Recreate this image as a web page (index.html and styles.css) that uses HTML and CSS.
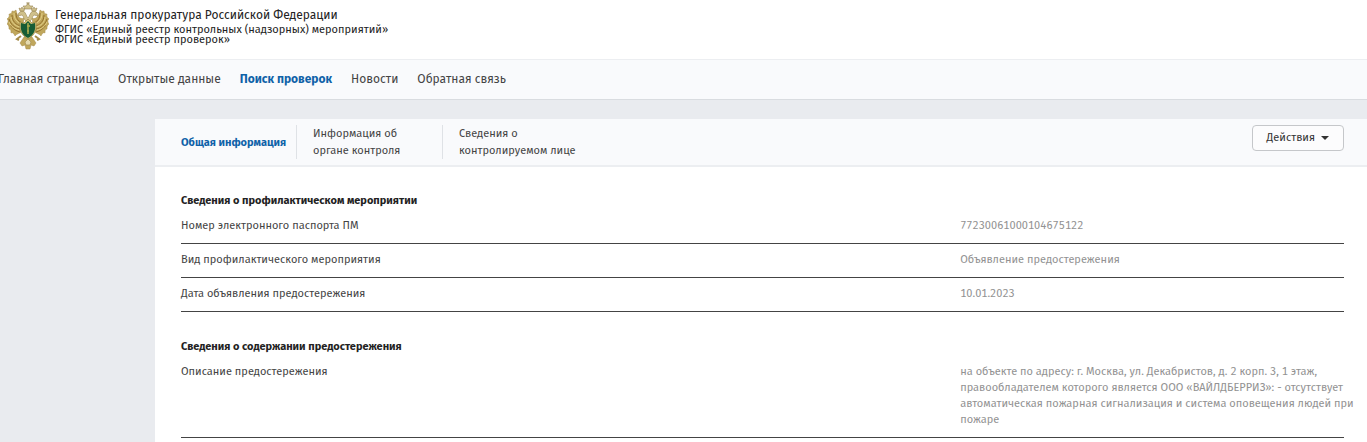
FILE: index.html
```html
<!DOCTYPE html>
<html lang="ru">
<head>
<meta charset="utf-8">
<meta name="viewport" content="width=device-width, initial-scale=1">
<title>ФГИС «Единый реестр проверок»</title>
<link rel="stylesheet" href="styles.css">
</head>
<body>
<header class="header">
  <svg class="emblem" viewBox="0 0 42 48" aria-hidden="true">
    <g fill="#c0a75c" stroke="#a58b48" stroke-width=".5">
      <path d="M17 16C13 18 10 14 9 8C7 10 6 9 5 9C5 12 3 12 2 12C3 15 1 16 0 17C2 18 1 21 0 22C2 23 2 25 2 27C4 27 4 29 4 31C6 30 7 32 8 34C10 31 13 32 15 29Z"/>
      <path d="M25 16C29 18 32 14 33 8C35 10 36 9 37 9C37 12 39 12 40 12C39 15 41 16 42 17C40 18 41 21 42 22C40 23 40 25 40 27C38 27 38 29 38 31C36 30 35 32 34 34C32 31 29 32 27 29Z"/>
      <path d="M17 35L13 41L15 44L18 43L19 47L23 47L24 43L27 44L29 41L25 35Z"/>
      <path d="M14 34L10 37L12 38M28 34L32 37L30 38" fill="none" stroke-width="2"/>
    </g>
    <g fill="none" stroke="#94712b" stroke-width="1">
      <path d="M9 11C9 17 12 20 16 21M5 13C5 19 9 23 14 24M2 17C4 23 8 26 13 27M3 23C6 27 9 29 13 30"/>
      <path d="M33 11C33 17 30 20 26 21M37 13C37 19 33 23 28 24M40 17C38 23 34 26 29 27M39 23C36 27 33 29 29 30"/>
    </g>
    <g fill="none" stroke="#e3cf86" stroke-width="1">
      <path d="M7 11C7 17 10 20 14 22M4 15C4 20 8 24 13 25M2 20C4 25 8 27 12 28"/>
      <path d="M35 11C35 17 32 20 28 22M38 15C38 20 34 24 29 25M40 20C38 25 34 27 30 28"/>
    </g>
    <g fill="#cfc08b" stroke="#998550" stroke-width=".6">
      <path d="M19 19C16 17 17 14 15 13L11 14C11 11 13 9 16 9C19 10 19 14 21 16C23 14 23 10 26 9C29 9 31 11 31 14L27 13C25 14 26 17 23 19Z"/>
      <path d="M13 9L12 6L14 7L15 5L16 7L18 6L17 9ZM25 9L24 6L26 7L27 5L28 7L30 6L29 9Z"/>
      <path d="M18 7L16 4L19 4L21 1L23 4L26 4L24 7Z"/>
      <path d="M21 0V3M19 1H23" fill="none"/>
    </g>
    <path d="M13 20L17 21L21 17L25 21L29 20C30 28 28 33 21 37C14 33 12 28 13 20Z" fill="#d7c67a" stroke="#9c8444" stroke-width=".7"/>
    <path d="M14 21L18 22L21 19L24 22L28 21C29 28 27 33 21 36C15 33 13 28 14 21Z" fill="#175c35"/>
    <path d="M21 21V32M20 24H23M20 29H22" fill="none" stroke="#a9a94c" stroke-width="1.5"/>
    <path d="M18 40L21 37L24 40L23 43H19Z" fill="#e5dab0" stroke="#a58f54" stroke-width=".7"/>
  </svg>
  <div class="brand">
    <div class="brand-name">Генеральная прокуратура Российской Федерации</div>
    <div class="brand-system">ФГИС «Единый реестр контрольных (надзорных) мероприятий»</div>
    <div class="brand-system">ФГИС «Единый реестр проверок»</div>
  </div>
</header>
<nav class="nav">
  <a href="#">Главная страница</a>
  <a href="#">Открытые данные</a>
  <a class="active" href="#">Поиск проверок</a>
  <a href="#">Новости</a>
  <a href="#">Обратная связь</a>
</nav>
<main class="card">
  <div class="toolbar">
    <div class="tabs">
      <a class="tab active" href="#">Общая информация</a>
      <a class="tab" href="#">Информация об органе контроля</a>
      <a class="tab tab-wide" href="#">Сведения о контролируемом лице</a>
    </div>
    <button class="actions" type="button">Действия
      <svg class="caret" viewBox="0 0 8 4" aria-hidden="true"><path d="M0 0H8L4 4Z" fill="#333"/></svg>
    </button>
  </div>
  <div class="content">
    <section class="section">
      <h2>Сведения о профилактическом мероприятии</h2>
      <table>
        <tr><th scope="row">Номер электронного паспорта ПМ</th><td>77230061000104675122</td></tr>
        <tr><th scope="row">Вид профилактического мероприятия</th><td>Объявление предостережения</td></tr>
        <tr><th scope="row">Дата объявления предостережения</th><td>10.01.2023</td></tr>
      </table>
    </section>
    <section class="section">
      <h2>Сведения о содержании предостережения</h2>
      <table>
        <tr><th scope="row">Описание предостережения</th><td class="description">на объекте по адресу: г. Москва, ул. Декабристов, д. 2 корп. 3, 1 этаж,<br>правообладателем которого является ООО «ВАЙЛДБЕРРИЗ»: - отсутствует<br>автоматическая пожарная сигнализация и система оповещения людей при<br>пожаре</td></tr>
      </table>
    </section>
  </div>
</main>
</body>
</html>
```
FILE: styles.css
```css
* { box-sizing: border-box; }
html { background: #e9ebef; }
body {
  margin: 0;
  overflow-x: hidden;
  font-family: "Fira Sans", Roboto, "Noto Sans", sans-serif;
  font-size: 11px;
  font-variant-numeric: tabular-nums;
  line-height: 16px;
  color: #444;
}
a { color: inherit; text-decoration: none; }

.header {
  display: flex;
  gap: 6px;
  height: 59px;
  padding: 2px 7px;
  background: #fff;
}
.emblem { width: 42px; height: 48px; }
.brand { padding-top: 5px; color: #222; }
.brand-name { font-size: 12px; line-height: 16px; margin-bottom: 2px; }
.brand-system { line-height: 10px; white-space: nowrap; }

.nav {
  display: flex;
  align-items: center;
  gap: 19px;
  height: 41px;
  padding-bottom: 2px;
  margin-left: -2px;
  border-top: 1px solid #eceef1;
  border-bottom: 1px solid #d9dce0;
  background: #f9fafc;
  font-size: 12px;
  white-space: nowrap;
}
.active { color: #0f62a8; font-weight: 700; }

.card { margin: 19px 0 0 155px; background: #fff; }
.toolbar {
  display: flex;
  justify-content: space-between;
  align-items: flex-start;
  padding: 6px 23px 6px 10px;
  border-bottom: 2px solid #eceef1;
  background: #f9fafc;
}
.tabs { display: flex; }
.tab {
  display: flex;
  align-items: center;
  width: 146px;
  padding: 0 16px;
  border-left: 1px solid #dfe2e6;
  line-height: 17px;
}
.tab:first-child { width: 131px; border-left: 0; white-space: nowrap; }
.tab-wide { width: 156px; }
.actions {
  display: flex;
  align-items: center;
  gap: 6px;
  height: 26px;
  padding: 0 14px;
  border: 1px solid #c5c7ca;
  border-radius: 4px;
  background: #fcfcfd;
  font: inherit;
  color: #333;
}
.caret { width: 8px; height: 4px; }

.content { padding: 26px 23px 1px 26px; }
.section { margin-bottom: 27px; }
h2 { margin: 0 0 1px; font-size: 11px; line-height: 16px; color: #222; }
table { width: 100%; border-collapse: collapse; table-layout: fixed; }
th, td { padding: 8px 0 9px; vertical-align: top; border-bottom: 1px solid #444; text-align: left; font-weight: 400; }
th { width: 67%; }
td { color: #929292; }
.description { white-space: nowrap; }
```
